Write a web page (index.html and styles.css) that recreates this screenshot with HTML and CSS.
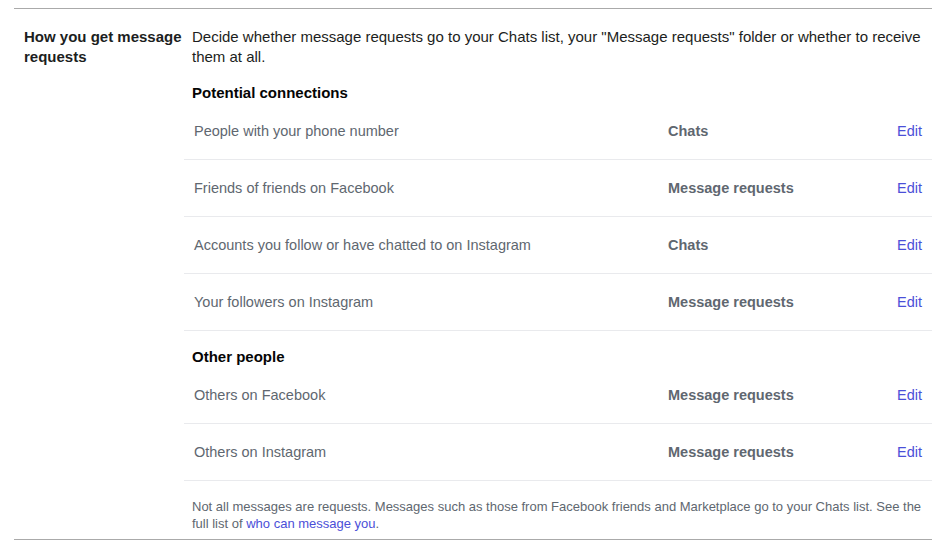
FILE: index.html
```html
<!DOCTYPE html>
<html>
<head>
<meta charset="utf-8">
<link rel="stylesheet" href="styles.css">
</head>
<body>
<section class="setting">
  <div class="setting-label">How you get message requests</div>
  <div class="setting-body">
    <p class="desc">Decide whether message requests go to your Chats list, your "Message requests" folder or whether to receive them at all.</p>
    <h3 class="group-title">Potential connections</h3>
    <ul class="rows">
      <li class="row"><span class="row-name">People with your phone number</span><span class="row-value">Chats</span><a class="row-edit" href="#">Edit</a></li>
      <li class="row"><span class="row-name">Friends of friends on Facebook</span><span class="row-value">Message requests</span><a class="row-edit" href="#">Edit</a></li>
      <li class="row"><span class="row-name">Accounts you follow or have chatted to on Instagram</span><span class="row-value">Chats</span><a class="row-edit" href="#">Edit</a></li>
      <li class="row"><span class="row-name">Your followers on Instagram</span><span class="row-value">Message requests</span><a class="row-edit" href="#">Edit</a></li>
    </ul>
    <h3 class="group-title">Other people</h3>
    <ul class="rows">
      <li class="row"><span class="row-name">Others on Facebook</span><span class="row-value">Message requests</span><a class="row-edit" href="#">Edit</a></li>
      <li class="row"><span class="row-name">Others on Instagram</span><span class="row-value">Message requests</span><a class="row-edit" href="#">Edit</a></li>
    </ul>
    <p class="note">Not all messages are requests. Messages such as those from Facebook friends and Marketplace go to your Chats list. See the full list of <a href="#">who can message you</a>.</p>
  </div>
</section>
</body>
</html>
```
FILE: styles.css
```css
html, body {
  margin: 0;
  padding: 0;
  background: #fff;
}
body {
  padding: 8px 9px 0 14px;
  font-family: "Liberation Sans", Arial, sans-serif;
  color: #1c1e21;
}
.setting {
  display: grid;
  grid-template-columns: 170px 1fr;
  border-top: 1px solid #aaaaaa;
  border-bottom: 1px solid #aaaaaa;
  padding: 18px 0 7px;
}
.setting-label {
  padding-left: 10px;
  font-size: 15px;
  line-height: 20px;
  font-weight: bold;
  color: #1c1e21;
}
.setting-body {
  min-width: 0;
}
.desc {
  margin: 0;
  padding-left: 8px;
  font-size: 15px;
  line-height: 20px;
  color: #1c1e21;
}
.group-title {
  margin: 16px 0 0;
  padding-left: 8px;
  font-size: 15px;
  line-height: 20px;
  font-weight: bold;
  color: #050505;
}
.rows {
  list-style: none;
  margin: 0;
  padding: 0;
}
.row {
  display: grid;
  grid-template-columns: 474px 1fr auto;
  align-items: center;
  padding: 18px 10px;
  border-bottom: 1px solid #e9eaed;
  font-size: 14.5px;
  line-height: 20px;
}
.row-name {
  color: #606770;
}
.row-value {
  color: #606770;
  font-weight: bold;
}
.row-edit {
  color: #4b4fd8;
  text-decoration: none;
}
.note {
  margin: 17px 0 0;
  padding-left: 8px;
  font-size: 13px;
  line-height: 17px;
  color: #606770;
}
.note a {
  color: #4b4fd8;
  text-decoration: none;
}
```
